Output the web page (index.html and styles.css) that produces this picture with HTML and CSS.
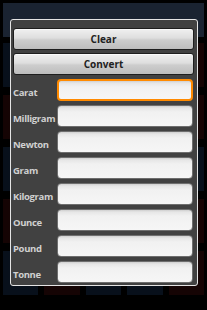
FILE: index.html
```html
<!DOCTYPE html>
<html lang="en">
<head>
  <meta charset="UTF-8">
  <meta name="viewport" content="width=device-width, initial-scale=1.0">
  <title>Weight Converter</title>
  <link rel="stylesheet" href="styles.css">
</head>
<body>
  <!-- dimmed activity behind the dialog -->
  <div class="backdrop">
    <div class="title-bar"></div>
    <div class="tile-grid">
      <div class="tile blue"></div><div class="tile red"></div><div class="tile blue"></div><div class="tile blue"></div><div class="tile red"></div>
      <div class="tile red"></div><div class="tile blue"></div><div class="tile red"></div><div class="tile blue"></div><div class="tile red"></div>
      <div class="tile blue"></div><div class="tile red"></div><div class="tile blue"></div><div class="tile red"></div><div class="tile blue"></div>
      <div class="tile red"></div><div class="tile blue"></div><div class="tile red"></div><div class="tile blue"></div><div class="tile red"></div>
      <div class="tile blue"></div><div class="tile red"></div><div class="tile blue"></div><div class="tile blue"></div><div class="tile red"></div>
    </div>
  </div>

  <div class="dialog">
    <button type="button" class="dialog-button">Clear</button>
    <button type="button" class="dialog-button">Convert</button>

    <div class="unit-table">
      <label class="unit-row"><span class="unit-label">Carat</span><input class="unit-input focused" type="text"></label>
      <label class="unit-row"><span class="unit-label">Milligram</span><input class="unit-input" type="text"></label>
      <label class="unit-row"><span class="unit-label">Newton</span><input class="unit-input" type="text"></label>
      <label class="unit-row"><span class="unit-label">Gram</span><input class="unit-input" type="text"></label>
      <label class="unit-row"><span class="unit-label">Kilogram</span><input class="unit-input" type="text"></label>
      <label class="unit-row"><span class="unit-label">Ounce</span><input class="unit-input" type="text"></label>
      <label class="unit-row"><span class="unit-label">Pound</span><input class="unit-input" type="text"></label>
      <label class="unit-row"><span class="unit-label">Tonne</span><input class="unit-input" type="text"></label>
    </div>
  </div>
</body>
</html>
```

FILE: styles.css
```css
:root {
  --color-screen: #000000;
  --color-title: #1a2331;
  --color-dialog: #414141;
  --color-dialog-border: #e4e4e4;
  --color-label: #d0d0d0;
  --color-button-text: #222222;
  --color-focus: #ff8a00;

  --font-primary: "Open Sans", "DejaVu Sans", sans-serif;
}

* {
  box-sizing: border-box;
  margin: 0;
  padding: 0;
}

body {
  width: 207px;
  height: 310px;
  position: relative;
  overflow: hidden;
  background-color: var(--color-screen);
  font-family: var(--font-primary);
}

/* Backdrop (the activity dimmed behind the dialog) */
.backdrop {
  padding: 3px 3px 0;
}

.title-bar {
  height: 34px;
  background-color: var(--color-title);
}

.tile-grid {
  display: grid;
  grid-template-columns: repeat(5, 1fr);
  gap: 8px 6px;
  padding-top: 6px;
}

.tile {
  height: 44px;
}

.tile.blue {
  background-color: #08101b;
}

.tile.red {
  background-color: #150404;
}

/* Dialog overlay */
.dialog {
  position: absolute;
  left: 10px;
  top: 19px;
  width: 188px;
  height: 267px;
  display: flex;
  flex-direction: column;
  padding: 8px 3px 2px 2px;
  background-color: var(--color-dialog);
  border: 1px solid var(--color-dialog-border);
  border-radius: 3px;
}

.dialog-button {
  height: 22px;
  margin-bottom: 3px;
  border: 1px solid #1e1e1e;
  border-radius: 3px;
  background: linear-gradient(#f0f0f0 0%, #dedede 45%, #cdcdcd 55%, #bdbdbd 100%);
  box-shadow: inset 0 1px 0 #fafafa;
  color: var(--color-button-text);
  font-family: var(--font-primary);
  font-size: 10px;
  font-weight: 700;
  cursor: pointer;
}

.unit-table {
  display: flex;
  flex-direction: column;
  gap: 4px;
  margin-top: 1px;
}

.unit-row {
  display: flex;
  align-items: center;
  height: 22px;
}

.unit-label {
  flex: 0 0 44px;
  padding-top: 4px;
  color: var(--color-label);
  font-size: 9.5px;
  font-weight: 700;
  letter-spacing: -0.35px;
  white-space: nowrap;
}

.unit-input {
  flex: 1;
  width: 0;
  min-width: 0;
  height: 22px;
  margin-right: 1px;
  border: 1px solid #6e6e6e;
  border-radius: 4px;
  background: linear-gradient(#cfcfcf 0px, #e6e6e6 2px, #f1f1f1 6px, #f6f6f6 100%);
  outline: none;
}

.unit-input.focused {
  border: 2px solid var(--color-focus);
}
```
